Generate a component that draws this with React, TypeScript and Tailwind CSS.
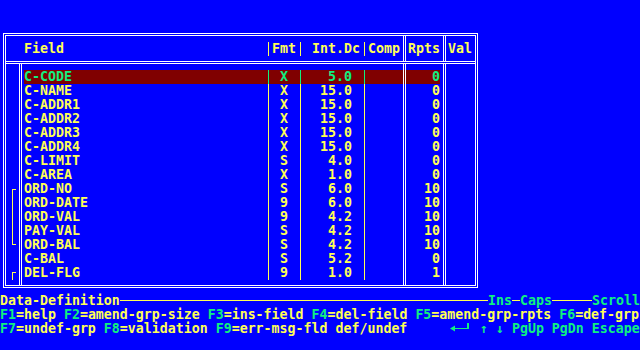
import React from 'react';

type Grp = '' | 'top' | 'mid' | 'end' | 'start';

interface FieldRow {
  name: string;
  fmt: string;
  dc: string;
  rpts: string;
  grp: Grp;
}

const fields: FieldRow[] = [
  { name: 'C-CODE', fmt: 'X', dc: '5.0', rpts: '0', grp: '' },
  { name: 'C-NAME', fmt: 'X', dc: '15.0', rpts: '0', grp: '' },
  { name: 'C-ADDR1', fmt: 'X', dc: '15.0', rpts: '0', grp: '' },
  { name: 'C-ADDR2', fmt: 'X', dc: '15.0', rpts: '0', grp: '' },
  { name: 'C-ADDR3', fmt: 'X', dc: '15.0', rpts: '0', grp: '' },
  { name: 'C-ADDR4', fmt: 'X', dc: '15.0', rpts: '0', grp: '' },
  { name: 'C-LIMIT', fmt: 'S', dc: '4.0', rpts: '0', grp: '' },
  { name: 'C-AREA', fmt: 'X', dc: '1.0', rpts: '0', grp: '' },
  { name: 'ORD-NO', fmt: 'S', dc: '6.0', rpts: '10', grp: 'top' },
  { name: 'ORD-DATE', fmt: '9', dc: '6.0', rpts: '10', grp: 'mid' },
  { name: 'ORD-VAL', fmt: '9', dc: '4.2', rpts: '10', grp: 'mid' },
  { name: 'PAY-VAL', fmt: 'S', dc: '4.2', rpts: '10', grp: 'mid' },
  { name: 'ORD-BAL', fmt: 'S', dc: '4.2', rpts: '10', grp: 'end' },
  { name: 'C-BAL', fmt: 'S', dc: '5.2', rpts: '0', grp: '' },
  { name: 'DEL-FLG', fmt: '9', dc: '1.0', rpts: '1', grp: 'start' },
];

const bracketClass: Record<Grp, string> = {
  '': '',
  top: 'ml-[6px] mt-[7px] h-[7px] w-[4px] border-l border-t border-[#ffff55]',
  mid: 'ml-[6px] h-[14px] w-[4px] border-l border-[#ffff55]',
  end: 'ml-[6px] h-[7px] w-[4px] border-l border-b border-[#ffff55]',
  start: 'ml-[6px] mt-[6px] h-[8px] w-[4px] border-l border-t border-[#ffff55]',
};

const keysTop = [
  ['F1', '=help '],
  ['F2', '=amend-grp-size '],
  ['F3', '=ins-field '],
  ['F4', '=del-field '],
  ['F5', '=amend-grp-rpts '],
  ['F6', '=def-grp'],
];

const keysBottom = [
  ['F7', '=undef-grp '],
  ['F8', '=validation '],
  ['F9', '=err-msg-fld def/undef'],
];

const EnterKey = () => (
  <svg width="24" height="14" viewBox="0 0 24 14" className="shrink-0">
    <polygon points="2,6.5 7,3.5 7,9.5" fill="#10f080" />
    <rect x="7" y="6" width="13" height="1" fill="#10f080" />
    <rect x="19" y="1" width="2" height="6" fill="#10f080" />
  </svg>
);

export default function App() {
  return (
    <div className="w-[640px] h-[350px] overflow-hidden whitespace-pre bg-[#0000ff] pt-[33px] font-['DejaVu_Sans_Mono',monospace] text-[13.28px] leading-[14px] font-bold text-[#ffff55]">
      {/* field table */}
      <div className="ml-[3px] w-[475px] h-[255px] border-[3px] border-double border-white">
        <div className="flex h-[28px] border-b-[3px] border-double border-white">
          <div className="flex w-[397px] shrink-0 pt-[6px]">
            <span className="w-[262px] shrink-0 pl-[18px]">Field</span>
            <span className="w-px h-[14px] shrink-0 bg-[#ffff55]" />
            <span className="w-[31px] shrink-0 pl-[3px]">Fmt</span>
            <span className="w-px h-[14px] shrink-0 bg-[#ffff55]" />
            <span className="w-[63px] shrink-0 pl-[11px]">Int.Dc</span>
            <span className="w-px h-[14px] shrink-0 bg-[#ffff55]" />
            <span className="pl-[3px]">Comp</span>
          </div>
          <div className="w-[40px] shrink-0 border-l-[3px] border-double border-white pl-[2px] pt-[6px]">Rpts</div>
          <div className="w-[32px] shrink-0 border-l-[3px] border-double border-white pl-[2px] pt-[6px]">Val</div>
        </div>

        <div className="grid h-[221px] grid-cols-[13px_3px_381px_3px_37px_3px_29px] grid-rows-[6px_repeat(15,14px)_5px]">
          <div className="col-[3/6] row-[2/3] ml-[2px] mr-[3px] bg-[#800000]" />
          <div className="col-[2/3] row-[1/-1] border-l-[3px] border-double border-white" />
          <div className="col-[4/5] row-[1/-1] border-l-[3px] border-double border-white" />
          <div className="col-[6/7] row-[1/-1] border-l-[3px] border-double border-white" />

          <div className="col-[1/2] row-[2/17] flex flex-col">
            {fields.map((f) => (
              <div key={f.name} className="h-[14px]">
                {f.grp && <div className={bracketClass[f.grp]} />}
              </div>
            ))}
          </div>

          <div className="col-[3/4] row-[2/17] flex flex-col">
            {fields.map((f, i) => {
              const hi = i === 0;
              const line = hi ? 'w-px h-[14px] shrink-0 bg-[#10f080]' : 'w-px h-[14px] shrink-0 bg-[#ffff55]';
              return (
                <div key={f.name} className={`flex h-[14px] ${hi ? 'text-[#10f080]' : 'text-[#ffff55]'}`}>
                  <span className="w-[246px] shrink-0 pl-[2px]">{f.name}</span>
                  <span className={line} />
                  <span className="w-[31px] shrink-0 pl-[11px]">{f.fmt}</span>
                  <span className={line} />
                  <span className="w-[51px] shrink-0 text-right">{f.dc}</span>
                  <span className="w-[12px] shrink-0" />
                  <span className={line} />
                </div>
              );
            })}
          </div>

          <div className="col-[5/6] row-[2/17] flex flex-col">
            {fields.map((f, i) => (
              <div
                key={f.name}
                className={`h-[14px] pr-[3px] text-right ${i === 0 ? 'text-[#10f080]' : 'text-[#ffff55]'}`}
              >
                {f.rpts}
              </div>
            ))}
          </div>
        </div>
      </div>

      {/* status + function keys */}
      <div className="mt-[6px] flex h-[14px] items-start">
        <span className="w-[120px] shrink-0">Data-Definition</span>
        <span className="mt-[6px] h-px w-[368px] shrink-0 bg-[#ffff55]" />
        <span className="w-[24px] shrink-0 text-[#10f080]">Ins</span>
        <span className="mt-[6px] h-px w-[8px] shrink-0 bg-[#ffff55]" />
        <span className="w-[32px] shrink-0 text-[#10f080]">Caps</span>
        <span className="mt-[6px] h-px w-[40px] shrink-0 bg-[#ffff55]" />
        <span className="w-[48px] shrink-0 text-[#10f080]">Scroll</span>
      </div>
      <div className="flex h-[14px]">
        {keysTop.map(([k, d]) => (
          <React.Fragment key={k}>
            <span className="text-[#10f080]">{k}</span>
            <span>{d}</span>
          </React.Fragment>
        ))}
      </div>
      <div className="flex h-[14px]">
        <div className="flex w-[448px] shrink-0">
          {keysBottom.map(([k, d]) => (
            <React.Fragment key={k}>
              <span className="text-[#10f080]">{k}</span>
              <span>{d}</span>
            </React.Fragment>
          ))}
        </div>
        <EnterKey />
        <span className="text-[#10f080]"> ↑ ↓ PgUp PgDn Escape</span>
      </div>
    </div>
  );
}
